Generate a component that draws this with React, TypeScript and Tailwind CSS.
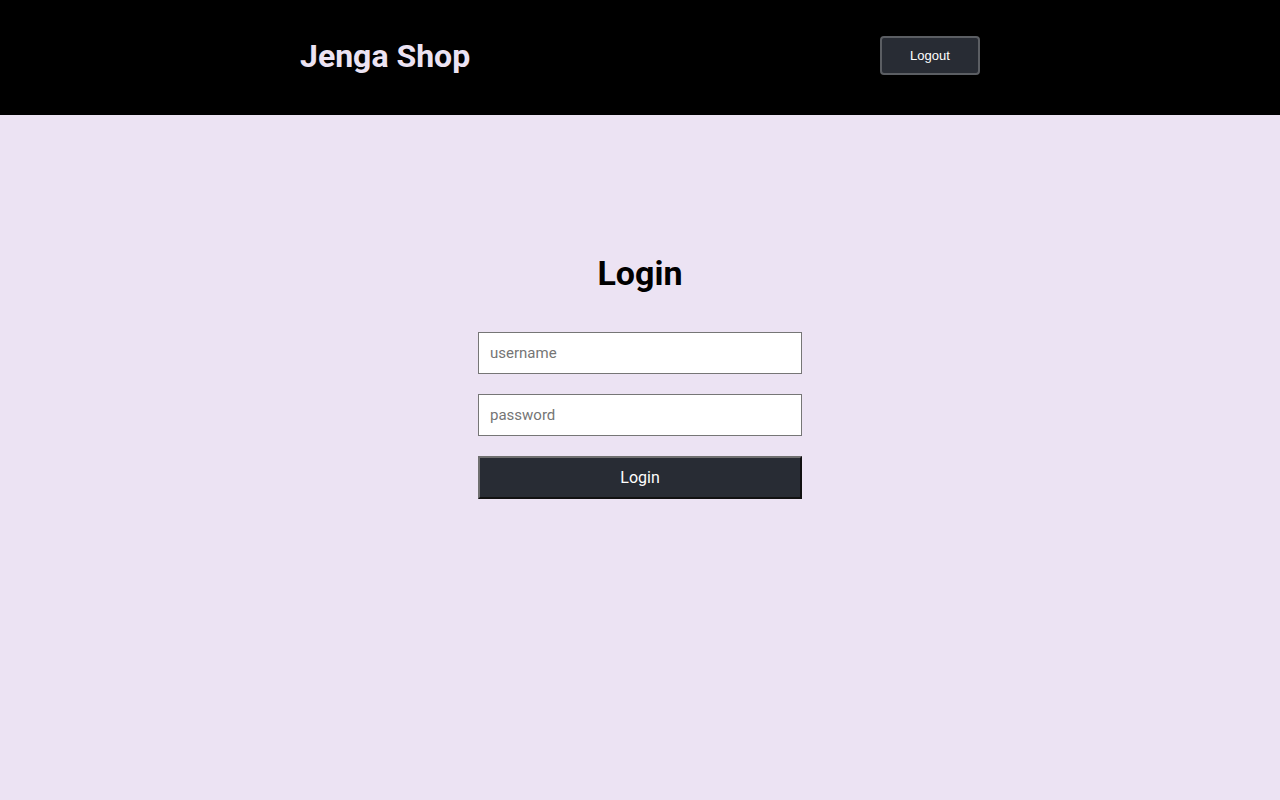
export default function App() {
  return (
    <div className="min-h-[800px] bg-[#ece3f3] font-['Roboto',sans-serif]">
      <header className="h-[115px] bg-black">
        <div className="mx-auto flex h-full w-[680px] items-center justify-between pb-[4px]">
          <h1 className="text-[32px] font-bold text-[#ece3f3]">Jenga Shop</h1>
          <button
            type="button"
            className="h-[39px] w-[100px] rounded-[4px] border-2 border-[#5b5e63] bg-[#282c34] font-['Liberation_Sans',sans-serif] text-[13px] text-white"
          >
            Logout
          </button>
        </div>
      </header>
      <main className="flex flex-col items-center pt-[137px]">
        <h2 className="text-[34px] leading-[42px] font-bold text-black">Login</h2>
        <form className="mt-[38px] flex w-[324px] flex-col gap-[20px]" onSubmit={(e) => e.preventDefault()}>
          <input
            type="text"
            placeholder="username"
            className="h-[42px] w-full border border-[#767676] bg-white px-[11px] text-[15px] placeholder:text-[#757575] outline-none"
          />
          <input
            type="password"
            placeholder="password"
            className="h-[42px] w-full border border-[#767676] bg-white px-[11px] text-[15px] placeholder:text-[#757575] outline-none"
          />
          <button
            type="submit"
            className="h-[43px] w-full border-2 border-t-[#6f6f6f] border-l-[#6f6f6f] border-r-[#111] border-b-[#111] bg-[#282c34] text-[16px] text-white"
          >
            Login
          </button>
        </form>
      </main>
    </div>
  );
}
